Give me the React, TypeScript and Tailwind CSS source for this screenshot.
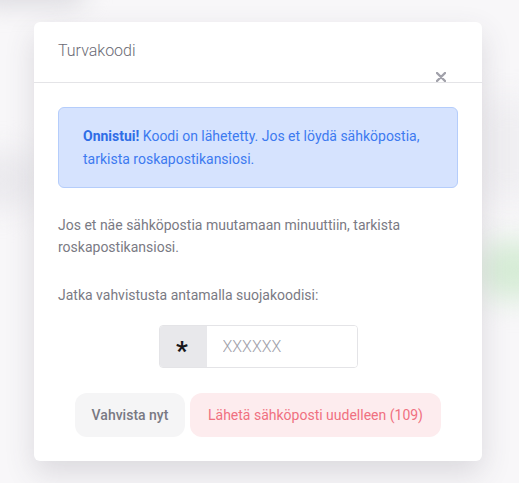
export default function App() {
  return (
    <div className="relative h-[483px] w-full overflow-hidden bg-[#f8f7f9] font-['Roboto',sans-serif]">
      {/* blurred page behind the dialog */}
      <div className="absolute -left-6 -top-6 h-[30px] w-[110px] rounded-full bg-[#dcdbe0] blur-[12px]" />
      <div className="absolute -left-10 top-[150px] h-[60px] w-[80px] rounded-full bg-[#ebeaee] blur-[14px]" />
      <div className="absolute right-[-30px] top-[240px] h-[60px] w-[70px] rounded-full bg-[#d6ecd6] blur-[14px]" />
      <div className="absolute right-[-20px] top-[100px] h-[100px] w-[60px] bg-[#efeef1] blur-[16px]" />

      <div className="relative ml-[34px] mt-[22px] w-[448px] rounded-md bg-white shadow-[0_12px_30px_rgba(70,60,80,0.16)]">
        <div className="relative h-[61px] border-b border-[#e4e4e7] pl-6 pt-[17px]">
          <h2 className="text-base font-light text-[#6b6b75]">Turvakoodi</h2>
          <button aria-label="Sulje" className="absolute bottom-[0px] right-[36px] text-[#a1a1aa]">
            <svg width="10" height="10" viewBox="0 0 10 10">
              <path d="M1 1L9 9M9 1L1 9" stroke="currentColor" strokeWidth="2.4" strokeLinecap="round" />
            </svg>
          </button>
        </div>

        <div className="px-6 pb-6 pt-6">
          <div className="rounded-md border border-[#b5cdfb] bg-[#d6e3fe] px-6 pb-4 pt-[17px] text-sm leading-[23px] text-[#3d7af0]">
            <strong className="font-bold text-[#2f6de6]">Onnistui!</strong> Koodi on lähetetty. Jos et löydä sähköpostia, tarkista roskapostikansiosi.
          </div>

          <p className="mt-[26px] text-sm leading-[22px] text-[#7a7a84]">
            Jos et näe sähköpostia muutamaan minuuttiin, tarkista roskapostikansiosi.
          </p>
          <p className="mt-[26px] text-sm leading-[22px] text-[#7a7a84]">
            Jatka vahvistusta antamalla suojakoodisi:
          </p>

          <div className="mt-[19px] flex justify-center">
            <div className="flex h-[43px] w-[199px] overflow-hidden rounded border border-[#e4e4e7]">
              <div className="flex w-[47px] shrink-0 items-center justify-center bg-[#e8e8eb] text-[26px] font-bold leading-none text-[#18181b]">
                <span className="ml-[-2px] mt-[9px]">*</span>
              </div>
              <input
                placeholder="XXXXXX"
                className="w-full min-w-0 bg-white pl-4 text-base font-light text-[#52525b] outline-none placeholder:text-[#a1a1aa]"
              />
            </div>
          </div>

          <div className="mt-[25px] flex justify-center gap-[5px]">
            <button className="h-11 w-[110px] rounded-xl bg-[#f5f5f6] text-sm font-medium text-[#797983]">
              Vahvista nyt
            </button>
            <button className="h-11 w-[251px] rounded-xl bg-[#fdecee] text-sm font-normal text-[#f07080]">
              Lähetä sähköposti uudelleen (109)
            </button>
          </div>
        </div>
      </div>
    </div>
  );
}
